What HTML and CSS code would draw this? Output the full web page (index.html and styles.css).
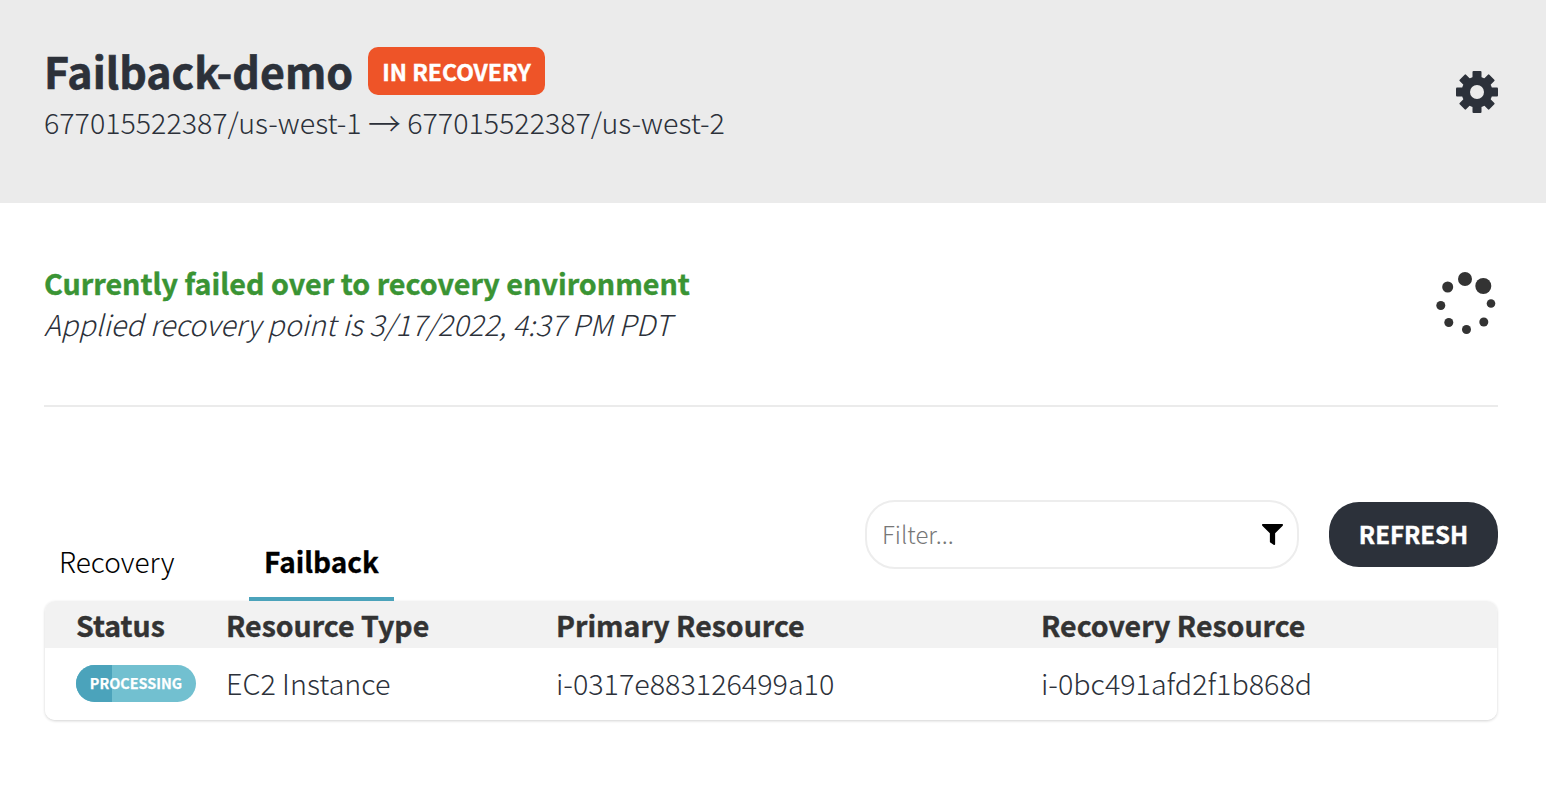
FILE: index.html
```html
<!DOCTYPE html>
<html lang="en">
<head>
<meta charset="utf-8">
<title>Failback-demo</title>
<link rel="stylesheet" href="styles.css">
</head>
<body>
<header class="head">
  <div>
    <div class="title-row">
      <h1 class="title">Failback-demo</h1>
      <span class="chip">IN RECOVERY</span>
    </div>
    <div class="sub">677015522387/us-west-1 <span class="arrow">→</span> 677015522387/us-west-2</div>
  </div>
  <svg class="gear" viewBox="-21 -21 42 42" aria-hidden="true">
    <g fill="#2c313a">
      <rect x="-4.5" y="-21" width="9" height="42" rx="1"/>
      <rect x="-4.5" y="-21" width="9" height="42" rx="1" transform="rotate(45)"/>
      <rect x="-4.5" y="-21" width="9" height="42" rx="1" transform="rotate(90)"/>
      <rect x="-4.5" y="-21" width="9" height="42" rx="1" transform="rotate(135)"/>
    </g>
    <circle r="11.2" fill="none" stroke="#2c313a" stroke-width="8.4"/>
    <circle r="7" fill="#ebebeb"/>
  </svg>
</header>
<main class="main">
  <section class="state">
    <div>
      <div class="state-title">Currently failed over to recovery environment</div>
      <div class="state-sub">Applied recovery point is 3/17/2022, 4:37 PM PDT</div>
    </div>
    <svg class="spinner" viewBox="0 0 62 66" aria-hidden="true">
      <g fill="#333">
        <circle cx="47.3" cy="15" r="8"/>
        <circle cx="29" cy="8" r="7"/>
        <circle cx="11.7" cy="16" r="5.5"/>
        <circle cx="4.8" cy="34.5" r="4.5"/>
        <circle cx="12.8" cy="51.5" r="4.5"/>
        <circle cx="30.5" cy="58.5" r="4.5"/>
        <circle cx="47.8" cy="51" r="4.5"/>
        <circle cx="55" cy="32.5" r="4.3"/>
      </g>
    </svg>
  </section>
  <section class="toolbar">
    <nav class="tabs">
      <div class="tab">Recovery</div>
      <div class="tab tab-on">Failback</div>
    </nav>
    <div class="tools">
      <div class="filter">
        <span class="filter-ph">Filter...</span>
        <svg class="funnel" viewBox="0 0 512 512" aria-hidden="true"><path d="M487.976 0H24.028C2.71 0-8.047 25.866 7.058 40.971L192 225.941V432c0 7.831 3.821 15.17 10.237 19.662l80 55.98C298.02 518.69 320 507.493 320 487.98V225.941l184.947-184.97C520.021 25.896 509.338 0 487.976 0z"/></svg>
      </div>
      <div class="refresh">REFRESH</div>
    </div>
  </section>
  <section class="table">
    <div class="row row-head">
      <div>Status</div>
      <div>Resource Type</div>
      <div>Primary Resource</div>
      <div>Recovery Resource</div>
    </div>
    <div class="row row-body">
      <div><span class="badge"><span class="badge-fill"></span><span class="badge-text">PROCESSING</span></span></div>
      <div>EC2 Instance</div>
      <div>i-0317e883126499a10</div>
      <div>i-0bc491afd2f1b868d</div>
    </div>
  </section>
</main>
</body>
</html>
```
FILE: styles.css
```css
* { box-sizing: border-box; }
html, body { margin: 0; padding: 0; background: #fff; }
body {
  font-family: "Noto Sans CJK SC", "Noto Sans", sans-serif;
  font-weight: 300;
  color: #2c313a;
  height: 804px;
  overflow: hidden;
}
.head {
  height: 203px;
  background: #ebebeb;
  padding: 47px 48px 0 44px;
  display: flex;
  justify-content: space-between;
  align-items: flex-start;
}
.title-row { display: flex; align-items: center; height: 48px; }
.title { margin: -2px 15px 0 0; font-size: 42.9px; line-height: 48px; font-weight: 700; color: #2c313a; -webkit-text-stroke: .6px #2c313a; }
.chip {
  height: 48px;
  padding: 0 14px;
  display: flex;
  align-items: center;
  background: #ee5428;
  color: #fff;
  border-radius: 10px;
  font-size: 23px;
  font-weight: 700;
  -webkit-text-stroke: .4px #fff;
}
.sub { font-size: 28.6px; line-height: 40px; margin-top: 7px; white-space: nowrap; }
.arrow { font-size: 33px; line-height: 0; vertical-align: -2px; }
.gear { width: 42px; height: 42px; margin-top: 24px; }
.main { padding: 0 48px 0 44px; }
.state {
  height: 204px;
  border-bottom: 2px solid #ebebeb;
  padding-top: 60px;
  display: flex;
  justify-content: space-between;
  align-items: flex-start;
}
.state-title { font-size: 28.7px; line-height: 40px; font-weight: 700; color: #3a9434; -webkit-text-stroke: .4px #3a9434; }
.state-sub { font-size: 28.7px; line-height: 40px; font-style: italic; margin: 1px 0 0 0; }
.spinner { width: 62px; height: 66px; margin: 8px 0 0 0; overflow: visible; }
.toolbar { display: flex; justify-content: space-between; align-items: flex-start; height: 194px; padding-top: 93px; }
.tabs { display: flex; padding-top: 37px; }
.tab { width: 145px; height: 64px; padding: 4px 15px; font-size: 28px; line-height: 40px; color: #000; text-align: center; margin-right: 60px; }
.tab:first-child { text-align: left; }
.tab-on { font-weight: 700; border-bottom: 4px solid #4ba3bb; -webkit-text-stroke: .3px #000; }
.tools { display: flex; align-items: center; gap: 30px; }
.filter {
  width: 434px;
  height: 69px;
  border: 2px solid #ededed;
  border-radius: 30px;
  padding: 0 15px 2px;
  display: flex;
  align-items: center;
  justify-content: space-between;
}
.filter-ph { font-size: 24px; color: #777; }
.funnel { width: 21px; height: 21px; margin-right: -1px; margin-top: 2px; }
.refresh {
  width: 169px;
  height: 65px;
  border-radius: 30px;
  background: #2c313a;
  color: #fff;
  font-size: 24px;
  font-weight: 700;
  -webkit-text-stroke: .4px #fff;
  padding-bottom: 2px;
  display: flex;
  align-items: center;
  justify-content: center;
}
.table {
  margin-left: 1px;
  margin-right: 1px;
  border-radius: 10px;
  box-shadow: 0 1px 3px rgba(0,0,0,.18);
  overflow: hidden;
}
.row { display: grid; grid-template-columns: 150px 330px 485px 1fr; padding-left: 31px; align-items: center; }
.row-head { height: 47px; background: #f2f2f2; font-size: 28.5px; font-weight: 700; color: #333; -webkit-text-stroke: .4px #333; }
.row-body { height: 72px; padding-bottom: 3px; background: #fff; font-size: 28.7px; }
.badge {
  position: relative;
  display: flex;
  align-items: center;
  justify-content: center;
  width: 120px;
  height: 37px;
  margin-top: 2px;
  border-radius: 19px;
  background: #72c0d0;
  overflow: hidden;
}
.badge-fill { position: absolute; left: 0; top: 0; bottom: 0; width: 30%; background: #4ba3bb; }
.badge-text { position: relative; top: -1px; color: #fff; font-size: 14.4px; font-weight: 700; -webkit-text-stroke: .25px #fff; }
```
